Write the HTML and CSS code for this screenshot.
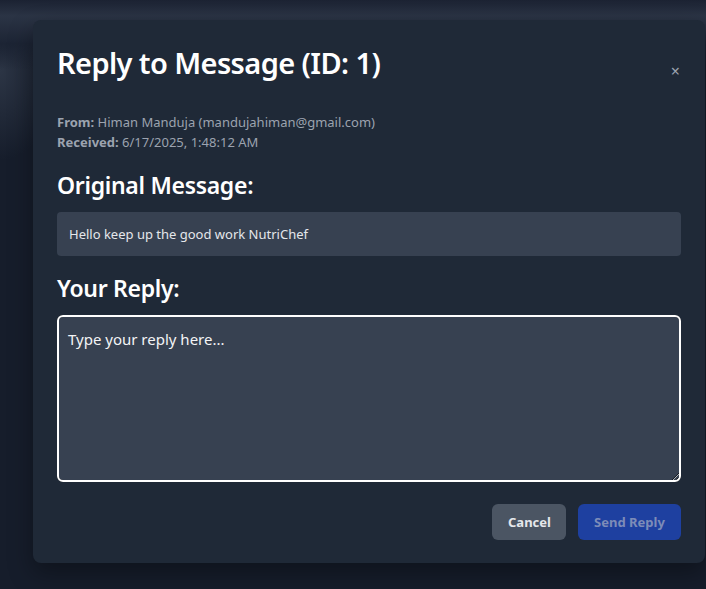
FILE: index.html
```html
<!DOCTYPE html>
<html lang="en">
<head>
<meta charset="utf-8">
<title>Reply to Message</title>
<link rel="stylesheet" href="styles.css">
</head>
<body>
<div class="backdrop">
  <div class="modal">
    <div class="modal-header">
      <h2 class="modal-title">Reply to Message (ID: 1)</h2>
      <button class="close-btn" aria-label="Close">×</button>
    </div>
    <div class="meta">
      <p><strong>From:</strong> Himan Manduja (mandujahiman@gmail.com)</p>
      <p><strong>Received:</strong> 6/17/2025, 1:48:12 AM</p>
    </div>
    <h3 class="section-title">Original Message:</h3>
    <div class="original">Hello keep up the good work NutriChef</div>
    <h3 class="section-title">Your Reply:</h3>
    <textarea class="reply" placeholder="Type your reply here..."></textarea>
    <div class="actions">
      <button class="btn btn-cancel">Cancel</button>
      <button class="btn btn-send" disabled>Send Reply</button>
    </div>
  </div>
</div>
</body>
</html>
```

FILE: styles.css
```css
* { box-sizing: border-box; }
html, body { margin: 0; padding: 0; }
body {
  width: 706px;
  height: 589px;
  overflow: hidden;
  font-family: "Noto Sans", "Open Sans", sans-serif;
  background:
    linear-gradient(180deg, #1b2232 0px, #2b3445 16px, #1c2434 44px, rgba(22,29,43,0) 70px),
    radial-gradient(ellipse 60px 90px at 0px 70px, #2c3545 0%, rgba(22,29,43,0) 100%),
    #161d2b;
}
.backdrop {
  padding: 20px 1px 0 33px;
}
.modal {
  background: #1f2937;
  border-radius: 8px;
  padding: 24px 24px 24px 24px;
  height: 543px;
  box-shadow: 0 10px 25px rgba(0,0,0,0.35);
}
.modal-header {
  display: flex;
  justify-content: space-between;
  align-items: flex-start;
}
.modal-title {
  margin: 1px 0 0 0;
  font-size: 29px;
  line-height: 36px;
  font-weight: 600;
  color: #ffffff;
  letter-spacing: -0.6px;
}
.close-btn {
  background: none;
  border: none;
  color: #9ca3af;
  font-size: 16px;
  line-height: 16px;
  padding: 0;
  margin: 19px 1px 0 0;
  font-family: "Noto Sans", sans-serif;
}
.meta {
  margin-top: 31px;
  font-size: 13px;
  line-height: 20px;
  color: #9ca3af;
}
.meta p { margin: 0; }
.meta strong { font-weight: 700; }
.section-title {
  margin: 0;
  font-size: 23px;
  line-height: 32px;
  font-weight: 600;
  color: #ffffff;
  letter-spacing: -0.3px;
}
.meta + .section-title { margin-top: 17px; }
.original {
  margin-top: 11px;
  background: #374151;
  border-radius: 4px;
  padding: 12px 12px;
  height: 44px;
  font-size: 13px;
  line-height: 20px;
  color: #e5e7eb;
}
.original + .section-title { margin-top: 16px; }
.reply {
  display: block;
  margin-top: 11px;
  width: 100%;
  height: 167px;
  background: #374151;
  border: 1px solid #000;
  outline: 2px solid #ffffff;
  outline-offset: -2px;
  border-radius: 6px;
  padding: 12px 10px;
  font-family: "Noto Sans", sans-serif;
  font-size: 15px;
  line-height: 22px;
  color: #f3f4f6;
  resize: vertical;
  box-shadow: inset 0 0 0 1px #000;
}
.reply::placeholder { color: #f3f4f6; opacity: 1; }
.actions {
  display: flex;
  justify-content: flex-end;
  gap: 12px;
  margin-top: 22px;
}
.btn {
  height: 36px;
  border: none;
  border-radius: 6px;
  padding: 0 16px;
  font-family: "Noto Sans", sans-serif;
  font-size: 13px;
  font-weight: 700;
}
.btn-cancel {
  background: #4b5563;
  color: #e5e7eb;
  width: 74px;
}
.btn-send {
  background: #1e40a0;
  color: #7d8cb8;
  width: 103px;
}
```
